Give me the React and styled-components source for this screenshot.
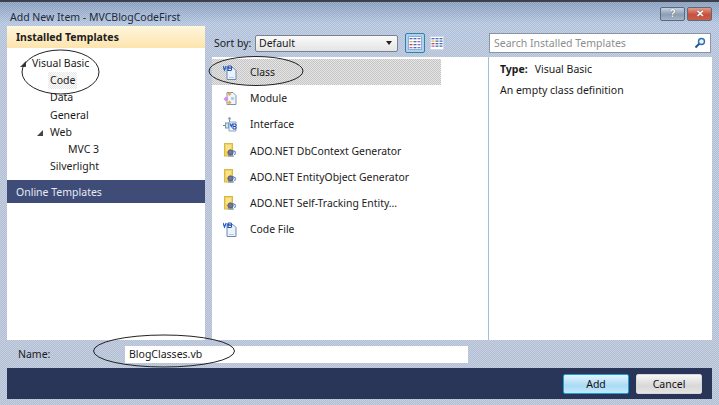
import React from "react";
import styled, { createGlobalStyle } from "styled-components";

const dither = (a, b) => `repeating-conic-gradient(${a} 0 25%, ${b} 0 50%) 0 0 / 2px 2px`;

const Global = createGlobalStyle`
  html, body { margin: 0; padding: 0; background: #c3d3e6; }
  * { box-sizing: border-box; }
`;

const Dialog = styled.div`
  position: relative;
  width: 719px;
  height: 405px;
  overflow: hidden;
  display: flex;
  flex-direction: column;
  font-family: "Noto Sans", sans-serif;
  font-size: 10.5px;
  color: #1a1a1a;
  background: repeating-conic-gradient(#00000010 0 25%, #ffffff18 0 50%) 0 0 / 2px 2px,
    linear-gradient(#8fa6c6 0, #bccde6 22px, #bfcbe0 60px, #bfcbe0 100%);
  border-top: 2px solid #3c3f4c;
  padding: 0 7px 6px 7px;
`;

const TitleBar = styled.div`
  height: 24px;
  flex: none;
  display: flex;
  align-items: center;
  justify-content: space-between;
  margin-left: -4px;
  padding-top: 6px;
  color: #1e2a3c;
`;

const Caption = styled.span`
  padding-left: 7px;
`;

const WindowButtons = styled.div`
  display: flex;
  gap: 2px;
  margin-top: -6px;
  margin-right: 0;
`;

const WindowButton = styled.div`
  width: 25px;
  height: 14px;
  border: 1px solid #5d6a7c;
  border-radius: 2px;
  background: ${(p) =>
    p.$close
      ? "linear-gradient(#e39a8c, #c9503c 55%, #c8604c)"
      : "linear-gradient(#c5d2e2, #8d9db3 55%, #a6b5c8)"};
  color: #fff;
  font: bold 10px/12px "Liberation Sans", sans-serif;
  text-align: center;
  text-shadow: 0 0 1px #333;
`;

const Body = styled.div`
  flex: 1;
  display: flex;
  min-height: 0;
`;

const LeftPanel = styled.div`
  width: 198px;
  flex: none;
  background: #fff;
  display: flex;
  flex-direction: column;
`;

const PanelHeader = styled.div`
  height: 22px;
  background: linear-gradient(#fff6dc, #fde4ae);
  font-weight: 700;
  padding-left: 9px;
  line-height: 23px;
  color: #202020;
`;

const Tree = styled.div`
  display: flex;
  flex-direction: column;
  padding-top: 7px;
  height: 132px;
`;

const TreeRow = styled.div`
  height: 17.2px;
  line-height: 17px;
  display: flex;
  align-items: center;
  padding-left: ${(p) => 25 + p.$level * 18}px;
  position: relative;
`;

const Expander = styled.span`
  position: absolute;
  left: ${(p) => 13 + p.$level * 17}px;
  top: 6px;
  width: 0;
  height: 0;
  border-left: 6px solid transparent;
  border-bottom: 6px solid #444;
`;

const FocusText = styled.span`
  background: ${dither("#e4e4e4", "#ffffff")};
  padding: 0 2px;
  margin-left: -2px;
`;

const OnlineBand = styled.div`
  height: 23px;
  background: #3f4c78;
  color: #e6eaf2;
  padding-left: 9px;
  line-height: 24px;
`;

const Middle = styled.div`
  flex: 1;
  display: flex;
  flex-direction: column;
  min-width: 0;
  margin-left: 7px;
`;

const Toolbar = styled.div`
  height: 31px;
  flex: none;
  display: flex;
  align-items: center;
  gap: 2px;
  padding-top: 3px;
  margin-left: -1px;
`;

const SortLabel = styled.span`
  margin: 0 3px 0 3px;
  white-space: nowrap;
  width: 36px;
  flex: none;
`;

const SortSelect = styled.div`
  width: 143px;
  height: 17px;
  flex: none;
  background: linear-gradient(#fafafa, #e4e4e4);
  border: 1px solid #7a8290;
  border-radius: 2px;
  padding-left: 3px;
  line-height: 14px;
  display: flex;
  justify-content: space-between;
  align-items: center;
`;

const Caret = styled.span`
  width: 0;
  height: 0;
  margin-right: 5px;
  border-left: 3.5px solid transparent;
  border-right: 3.5px solid transparent;
  border-top: 4px solid #222;
`;

const ViewButton = styled.div`
  width: 20px;
  height: 20px;
  flex: none;
  margin-left: ${(p) => (p.$first ? 5 : 0)}px;
  padding: 2px;
  border-radius: 2px;
  border: 1px solid ${(p) => (p.$active ? "#3b7ea6" : "transparent")};
  background: ${(p) => (p.$active ? "#a9d4ee" : "transparent")};
`;

const SearchBox = styled.div`
  width: 222px;
  height: 20px;
  flex: none;
  margin-left: 40px;
  background: #fff;
  border: 1px solid #8a94a6;
  color: #8d8d8d;
  padding: 0 4px;
  display: flex;
  justify-content: space-between;
  align-items: center;
`;

const Content = styled.div`
  flex: 1;
  display: flex;
  min-height: 0;
`;

const ItemList = styled.div`
  width: 277px;
  flex: none;
  background: #fff;
  padding: 2px 0 0 0;
  border-right: 1px solid #9fc0dc;
`;

const Item = styled.div`
  width: 229px;
  height: 26.2px;
  display: flex;
  align-items: center;
  padding-left: 11px;
  gap: 13px;
  background: ${(p) => (p.$selected ? dither("#c4c4c4", "#e6e6e6") : "transparent")};
`;

const ItemLabel = styled.span`
  font-size: 10.4px;
  white-space: nowrap;
`;

const Details = styled.div`
  flex: 1;
  background: #fff;
  padding: 2px 0 0 11px;
  line-height: 21px;
`;

const TypeLabel = styled.b`
  margin-right: 7px;
`;

const NameRow = styled.div`
  height: 28px;
  flex: none;
  display: flex;
  align-items: center;
  padding: 0 0 0 11px;
`;

const NameLabel = styled.span`
  width: 107px;
`;

const NameInput = styled.div`
  width: 343px;
  height: 17px;
  background: #fff;
  padding-left: 4px;
  line-height: 16px;
  color: #1a1a1a;
`;

const ActionBar = styled.div`
  height: 31px;
  flex: none;
  background: ${dither("#203a52", "#32305e")};
  display: flex;
  align-items: center;
  justify-content: flex-end;
  gap: 7px;
  padding-right: 10px;
`;

const Button = styled.div`
  width: 66px;
  height: 20px;
  text-align: center;
  line-height: 18px;
  border-radius: 2px;
  color: #111;
  border: 1px solid ${(p) => (p.$primary ? "#18a0d8" : "#d8d8d8")};
  background: ${(p) =>
    p.$primary
      ? "linear-gradient(#e4f3fc, #a9dbf6 60%, #c8e9fa)"
      : "linear-gradient(#f6f6f6, #d8d8d8 60%, #e4e4e4)"};
`;

const Annotations = styled.svg`
  position: absolute;
  left: 0;
  top: -2px;
  pointer-events: none;
`;

const VbIcon = () => (
  <svg width="14" height="15" viewBox="0 0 14 15">
    <path d="M4 2.500h6l3 3v9H4z" fill="#eaf2fb" stroke="#6f86ad" />
    <path d="M0 1l1.500 4L3.200 1" fill="none" stroke="#1f5fd0" strokeWidth="1.300" />
    <path d="M5 1v4.500h2.500a1.100 1.100 0 0 0 0-2.300H5m2.500 0a1 1 0 0 0 0-2.200H5" fill="#fff" stroke="#1f4fb0" strokeWidth="1.200" />
    <path d="M6 12.500h5" stroke="#b8c8de" />
  </svg>
);

const ModuleIcon = () => (
  <svg width="14" height="15" viewBox="0 0 14 15">
    <path d="M4 1.500h6l3 3v9H4z" fill="#f0f4fb" stroke="#7f93b5" />
    <path d="M3 5.500l2.500 2.500L3 10.500.5 8z" fill="#d88be6" />
    <path d="M6.500 1l2 2-2 2-2-2z" fill="#e6b13b" />
    <path d="M6.500 9.500l2 2-2 2-2-2z" fill="#e6b13b" />
    <path d="M8 6h3v3H8z" fill="#b8cbe6" />
  </svg>
);

const InterfaceIcon = () => (
  <svg width="14" height="15" viewBox="0 0 14 15">
    <circle cx="6.500" cy="1.500" r="1.300" fill="#7f97c0" />
    <path d="M6.500 2.500v3M0 8.500h3" stroke="#6b7f9f" />
    <rect x="2.500" y="6" width="3" height="5" fill="#cfe8e0" stroke="#7f93b5" />
    <path d="M6 5h7v9H6z" fill="#eef4fb" stroke="#8fa3c2" />
    <path d="M7 6.500l1.300 3 1.300-3" fill="none" stroke="#1f5fd0" strokeWidth="1.200" />
    <path d="M10 7v5h2a1 1 0 0 0 0-2.500h-2m2 0a1 1 0 0 0 0-2.500h-2" fill="none" stroke="#1f4fb0" />
  </svg>
);

const AdoIcon = () => (
  <svg width="14" height="15" viewBox="0 0 14 15">
    <rect x="1.500" y="0.500" width="8" height="12.500" fill="#f2d25c" stroke="#d8b84a" />
    <path d="M3 3h5M3 5h5M3 7h3" stroke="#fff2b8" />
    <circle cx="7.500" cy="9.500" r="2.600" fill="#6f7896" stroke="#4e5878" />
    <path d="M5 13h6M10 7.500l3 2M11 11.500l2-1" stroke="#5f86c8" strokeWidth="1.200" />
  </svg>
);

const GridIcon = ({ dense }) => (
  <svg width="14" height="14" viewBox="0 0 14 14">
    <rect x=".5" y=".5" width="13" height="13" fill="#fff" stroke={dense ? "#cfd8ea" : "#8fb0d4"} />
    {(dense ? [2, 4.500, 7, 9.500] : [2, 5, 8, 11]).map((y, i) => (
      <g key={y}>
        <rect x="1.500" y={y} width="3" height="1.300" fill={["#4a6fd0", "#e6b13b", "#d04848", "#c060c0"][i]} />
        <rect x="5.500" y={y} width="3" height="1.300" fill="#4a6fb0" />
        <rect x="9.500" y={y} width="3" height="1.300" fill={dense ? "#4a6fb0" : "#8a6cc8"} />
      </g>
    ))}
  </svg>
);

const SearchIcon = () => (
  <svg width="12" height="12" viewBox="0 0 12 12">
    <circle cx="7.500" cy="4.500" r="3" fill="#e4f1fb" stroke="#2f6fa8" strokeWidth="1.400" />
    <path d="M5.200 6.800L1.500 10.500" stroke="#1f5a90" strokeWidth="2" />
  </svg>
);

const items = [
  { label: "Class", Icon: VbIcon, selected: true },
  { label: "Module", Icon: ModuleIcon },
  { label: "Interface", Icon: InterfaceIcon },
  { label: "ADO.NET DbContext Generator", Icon: AdoIcon },
  { label: "ADO.NET EntityObject Generator", Icon: AdoIcon },
  { label: "ADO.NET Self-Tracking Entity...", Icon: AdoIcon },
  { label: "Code File", Icon: VbIcon },
];

export default function App() {
  return (
    <Dialog>
      <Global />
      <TitleBar>
        <Caption>Add New Item - MVCBlogCodeFirst</Caption>
        <WindowButtons>
          <WindowButton>?</WindowButton>
          <WindowButton $close>✕</WindowButton>
        </WindowButtons>
      </TitleBar>
      <Body>
        <LeftPanel>
          <PanelHeader>Installed Templates</PanelHeader>
          <Tree>
            <TreeRow $level={0}><Expander $level={0} />Visual Basic</TreeRow>
            <TreeRow $level={1}><FocusText>Code</FocusText></TreeRow>
            <TreeRow $level={1}>Data</TreeRow>
            <TreeRow $level={1}>General</TreeRow>
            <TreeRow $level={1}><Expander $level={1} />Web</TreeRow>
            <TreeRow $level={2}>MVC 3</TreeRow>
            <TreeRow $level={1}>Silverlight</TreeRow>
          </Tree>
          <OnlineBand>Online Templates</OnlineBand>
        </LeftPanel>
        <Middle>
          <Toolbar>
            <SortLabel>Sort by:</SortLabel>
            <SortSelect>Default<Caret /></SortSelect>
            <ViewButton $first $active><GridIcon /></ViewButton>
            <ViewButton><GridIcon dense /></ViewButton>
            <SearchBox>Search Installed Templates<SearchIcon /></SearchBox>
          </Toolbar>
          <Content>
            <ItemList>
              {items.map(({ label, Icon, selected }) => (
                <Item key={label} $selected={selected}><Icon /><ItemLabel>{label}</ItemLabel></Item>
              ))}
            </ItemList>
            <Details>
              <div><TypeLabel>Type:</TypeLabel>Visual Basic</div>
              <div>An empty class definition</div>
            </Details>
          </Content>
        </Middle>
      </Body>
      <NameRow>
        <NameLabel>Name:</NameLabel>
        <NameInput>BlogClasses.vb</NameInput>
      </NameRow>
      <ActionBar>
        <Button $primary>Add</Button>
        <Button>Cancel</Button>
      </ActionBar>
      <Annotations width="719" height="405">
        <ellipse cx="60.500" cy="72" rx="38.500" ry="22" fill="none" stroke="#222" />
        <ellipse cx="256" cy="71" rx="47" ry="14.500" fill="none" stroke="#222" />
        <ellipse cx="164" cy="351" rx="70.500" ry="16" fill="none" stroke="#222" />
      </Annotations>
    </Dialog>
  );
}
